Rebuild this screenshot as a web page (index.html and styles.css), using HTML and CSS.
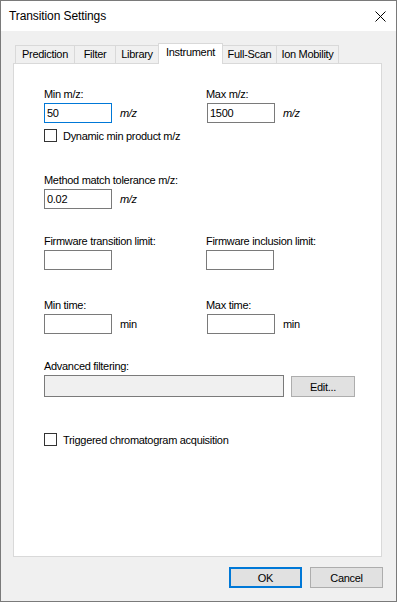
FILE: index.html
```html
<!DOCTYPE html>
<html lang="en">
<head>
    <meta charset="UTF-8">
    <meta name="viewport" content="width=device-width, initial-scale=1.0">
    <title>Transition Settings</title>
    <link rel="stylesheet" href="styles.css">
</head>
<body>
    <div class="window">
        <div class="titlebar">
            <span class="title">Transition Settings</span>
            <svg class="close-icon" width="11" height="11" viewBox="0 0 11 11">
                <path d="M0.5 0.5 L10.5 10.5 M10.5 0.5 L0.5 10.5" stroke="#000" stroke-width="1" fill="none"/>
            </svg>
        </div>

        <div class="dialog-body">
            <div class="tabs">
                <div class="tab tab-prediction">Prediction</div>
                <div class="tab tab-filter">Filter</div>
                <div class="tab tab-library">Library</div>
                <div class="tab tab-instrument selected">Instrument</div>
                <div class="tab tab-fullscan">Full-Scan</div>
                <div class="tab tab-ion">Ion Mobility</div>
            </div>

            <div class="tab-panel">
                <div class="field-row row-mz">
                    <div class="field">
                        <div class="label">Min m/z:</div>
                        <div class="input-line">
                            <input type="text" class="textbox focused" value="50">
                            <span class="unit italic">m/z</span>
                        </div>
                    </div>
                    <div class="field">
                        <div class="label">Max m/z:</div>
                        <div class="input-line">
                            <input type="text" class="textbox shift" value="1500">
                            <span class="unit italic">m/z</span>
                        </div>
                    </div>
                </div>

                <div class="check check-dynamic">
                    <span class="check-box"></span>
                    <span>Dynamic min product m/z</span>
                </div>

                <div class="field field-method">
                    <div class="label">Method match tolerance m/z:</div>
                    <div class="input-line">
                        <input type="text" class="textbox" value="0.02">
                        <span class="unit italic">m/z</span>
                    </div>
                </div>

                <div class="field-row row-firmware">
                    <div class="field">
                        <div class="label">Firmware transition limit:</div>
                        <div class="input-line">
                            <input type="text" class="textbox" value="">
                        </div>
                    </div>
                    <div class="field">
                        <div class="label">Firmware inclusion limit:</div>
                        <div class="input-line">
                            <input type="text" class="textbox" value="">
                        </div>
                    </div>
                </div>

                <div class="field-row row-time">
                    <div class="field">
                        <div class="label">Min time:</div>
                        <div class="input-line">
                            <input type="text" class="textbox" value="">
                            <span class="unit">min</span>
                        </div>
                    </div>
                    <div class="field">
                        <div class="label">Max time:</div>
                        <div class="input-line">
                            <input type="text" class="textbox shift" value="">
                            <span class="unit">min</span>
                        </div>
                    </div>
                </div>

                <div class="field field-advanced">
                    <div class="label">Advanced filtering:</div>
                    <div class="advanced-line">
                        <div class="textbox-disabled"></div>
                        <button class="btn btn-edit">Edit...</button>
                    </div>
                </div>

                <div class="check check-triggered">
                    <span class="check-box"></span>
                    <span>Triggered chromatogram acquisition</span>
                </div>
            </div>

            <div class="buttons">
                <button class="btn btn-dialog btn-default">OK</button>
                <button class="btn btn-dialog">Cancel</button>
            </div>
        </div>
    </div>
</body>
</html>
```

FILE: styles.css
```css
* {
    margin: 0;
    padding: 0;
    box-sizing: border-box;
    font-family: "Liberation Sans", Arial, sans-serif;
}

body {
    background: #f0f0f0;
    width: 397px;
    height: 602px;
    overflow: hidden;
}

.window {
    width: 397px;
    height: 602px;
    border: 1px solid #7a7a7a;
    display: flex;
    flex-direction: column;
    background: #f0f0f0;
    letter-spacing: -0.3px;
}

.titlebar {
    height: 30px;
    background: white;
    display: flex;
    align-items: center;
    justify-content: space-between;
    padding-left: 8px;
    padding-right: 10px;
}

.title {
    font-size: 12px;
    color: #000;
    letter-spacing: -0.1px;
}

.close-icon {
    display: block;
}

.dialog-body {
    flex: 1;
    display: flex;
    flex-direction: column;
    padding: 12px 14px 13px 12px;
}

/* Tab strip */
.tabs {
    height: 20px;
    display: flex;
    align-items: flex-end;
    margin-left: 2px;
}

.tab {
    height: 18px;
    border: 1px solid #d9d9d9;
    border-bottom: none;
    background: #f0f0f0;
    font-size: 11px;
    line-height: 16px;
    text-align: center;
    color: #000;
    margin-left: -1px;
    white-space: nowrap;
}

.tab-prediction { width: 60px; margin-left: 0; }
.tab-filter { width: 42px; }
.tab-library { width: 44px; }
.tab-instrument { width: 65px; }
.tab-fullscan { width: 55px; }
.tab-ion { width: 63px; }

.tab.selected {
    height: 21px;
    background: white;
    margin-bottom: -1px;
    padding-top: 1px;
    line-height: 15px;
    position: relative;
    z-index: 1;
}

.tab-panel {
    flex: 1;
    background: white;
    border: 1px solid #d9d9d9;
    padding-left: 30px;
}

/* Fields */
.field-row {
    display: flex;
}

.field-row .field {
    width: 162px;
}

.label {
    font-size: 11px;
    line-height: 13px;
    height: 13px;
    margin-bottom: 2px;
    color: #000;
    white-space: nowrap;
}

.input-line {
    display: flex;
    align-items: center;
    gap: 8px;
}

.textbox {
    width: 68px;
    height: 20px;
    border: 1px solid #7a7a7a;
    padding: 0 2px;
    font-size: 11px;
    letter-spacing: -0.3px;
    color: #000;
    background: white;
    outline: none;
}

.textbox.focused {
    border-color: #0078d7;
}

.textbox.shift {
    margin-left: 1px;
}

.unit {
    font-size: 11px;
    color: #000;
}

.italic {
    font-style: italic;
}

.row-mz { margin-top: 24px; }
.field-method { margin-top: 32px; }
.row-firmware { margin-top: 26px; }
.row-time { margin-top: 29px; }
.field-advanced { margin-top: 26px; }

.check {
    display: flex;
    align-items: center;
    gap: 6px;
    height: 13px;
    font-size: 11px;
    color: #000;
}

.check-box {
    width: 13px;
    height: 13px;
    border: 1px solid #333;
    background: white;
}

.check-dynamic { margin-top: 6px; }
.check-triggered { margin-top: 36px; }

.advanced-line {
    display: flex;
    align-items: flex-start;
    gap: 7px;
}

.textbox-disabled {
    width: 240px;
    height: 22px;
    border: 1px solid #7a7a7a;
    background: #f0f0f0;
}

/* Buttons */
.btn {
    background: #e1e1e1;
    border: 1px solid #adadad;
    font-size: 11px;
    letter-spacing: -0.3px;
    color: #000;
    cursor: pointer;
}

.btn-edit {
    width: 64px;
    height: 21px;
    margin-top: 1px;
}

.buttons {
    display: flex;
    justify-content: flex-end;
    gap: 8px;
    margin-top: 10px;
    margin-right: -1px;
}

.btn-dialog {
    width: 73px;
    height: 21px;
}

.btn-default {
    border: 2px solid #0078d7;
}
```
